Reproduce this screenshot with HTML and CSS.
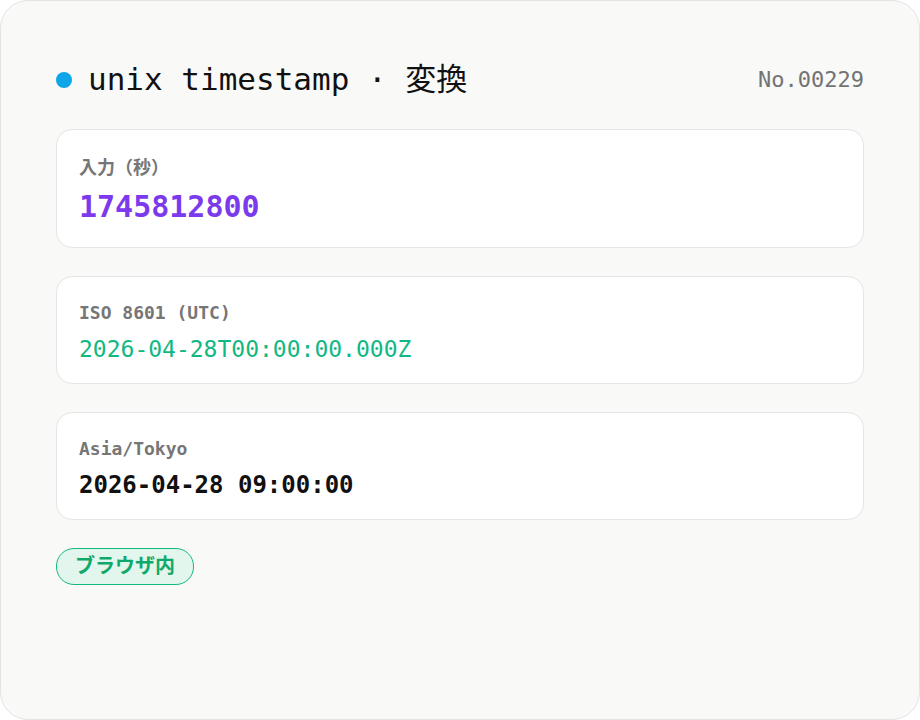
FILE: index.html
```html
<!DOCTYPE html>
<html>
    <head>
        <title>unix timestamp 変換</title>
        <meta charset="UTF-8">
        <link rel="stylesheet" href="styles.css">
    </head>
    <body>
        <div class="panel">
            <div class="head">
                <div class="title">
                    <span class="dot"></span>
                    <span>unix timestamp · 変換</span>
                </div>
                <div class="serial">No.00229</div>
            </div>
            <div class="card">
                <div class="label jp">入力（秒）</div>
                <div class="value input">1745812800</div>
            </div>
            <div class="card">
                <div class="label">ISO 8601 (UTC)</div>
                <div class="value iso">2026-04-28T00:00:00.000Z</div>
            </div>
            <div class="card">
                <div class="label">Asia/Tokyo</div>
                <div class="value local">2026-04-28 09:00:00</div>
            </div>
            <div class="tags">
                <span class="tag">ブラウザ内</span>
            </div>
        </div>
    </body>
</html>
```

FILE: styles.css
```css
* {
    margin: 0;
    padding: 0;
    box-sizing: border-box;
}

body {
    width: 920px;
    height: 720px;
    font-family: "DejaVu Sans Mono", "Noto Sans CJK JP", monospace;
    color: #111;
    background: #fff;
}

.panel {
    width: 920px;
    height: 720px;
    padding: 60px 55px 0;
    background: #f9f9f8;
    border: 1px solid #e4e4e7;
    border-radius: 28px;
}

.head {
    display: flex;
    justify-content: space-between;
    align-items: center;
    margin-bottom: 31px;
}

.title {
    display: flex;
    align-items: center;
    gap: 16px;
    font-size: 31px;
    line-height: 37px;
}

.dot {
    width: 16px;
    height: 16px;
    border-radius: 50%;
    background: #0ea5e9;
}

.serial {
    font-size: 22px;
    color: #737373;
}

.card {
    background: #fff;
    border: 1px solid #e5e5e5;
    border-radius: 16px;
    padding: 25px 22px 20px;
    margin-bottom: 28px;
}

.label {
    font-size: 18px;
    line-height: 22px;
    font-weight: bold;
    color: #767676;
}

.label.jp {
    font-family: "Noto Sans CJK JP", sans-serif;
    text-spacing-trim: space-all;
}

.value {
    margin-top: 11px;
    line-height: 28px;
}

.input {
    margin-top: 10px;
    font-size: 30px;
    line-height: 40px;
    font-weight: bold;
    color: #7c3aed;
}

.iso {
    font-size: 23px;
    color: #10b981;
}

.local {
    font-size: 24px;
    font-weight: bold;
    color: #111;
}

.tags {
    display: flex;
}

.tag {
    display: inline-block;
    padding: 4px 18px 5px;
    font-size: 20px;
    line-height: 26px;
    font-weight: bold;
    color: #10a96b;
    background: #e3f6ed;
    border: 1px solid #10b981;
    border-radius: 18px;
}
```
